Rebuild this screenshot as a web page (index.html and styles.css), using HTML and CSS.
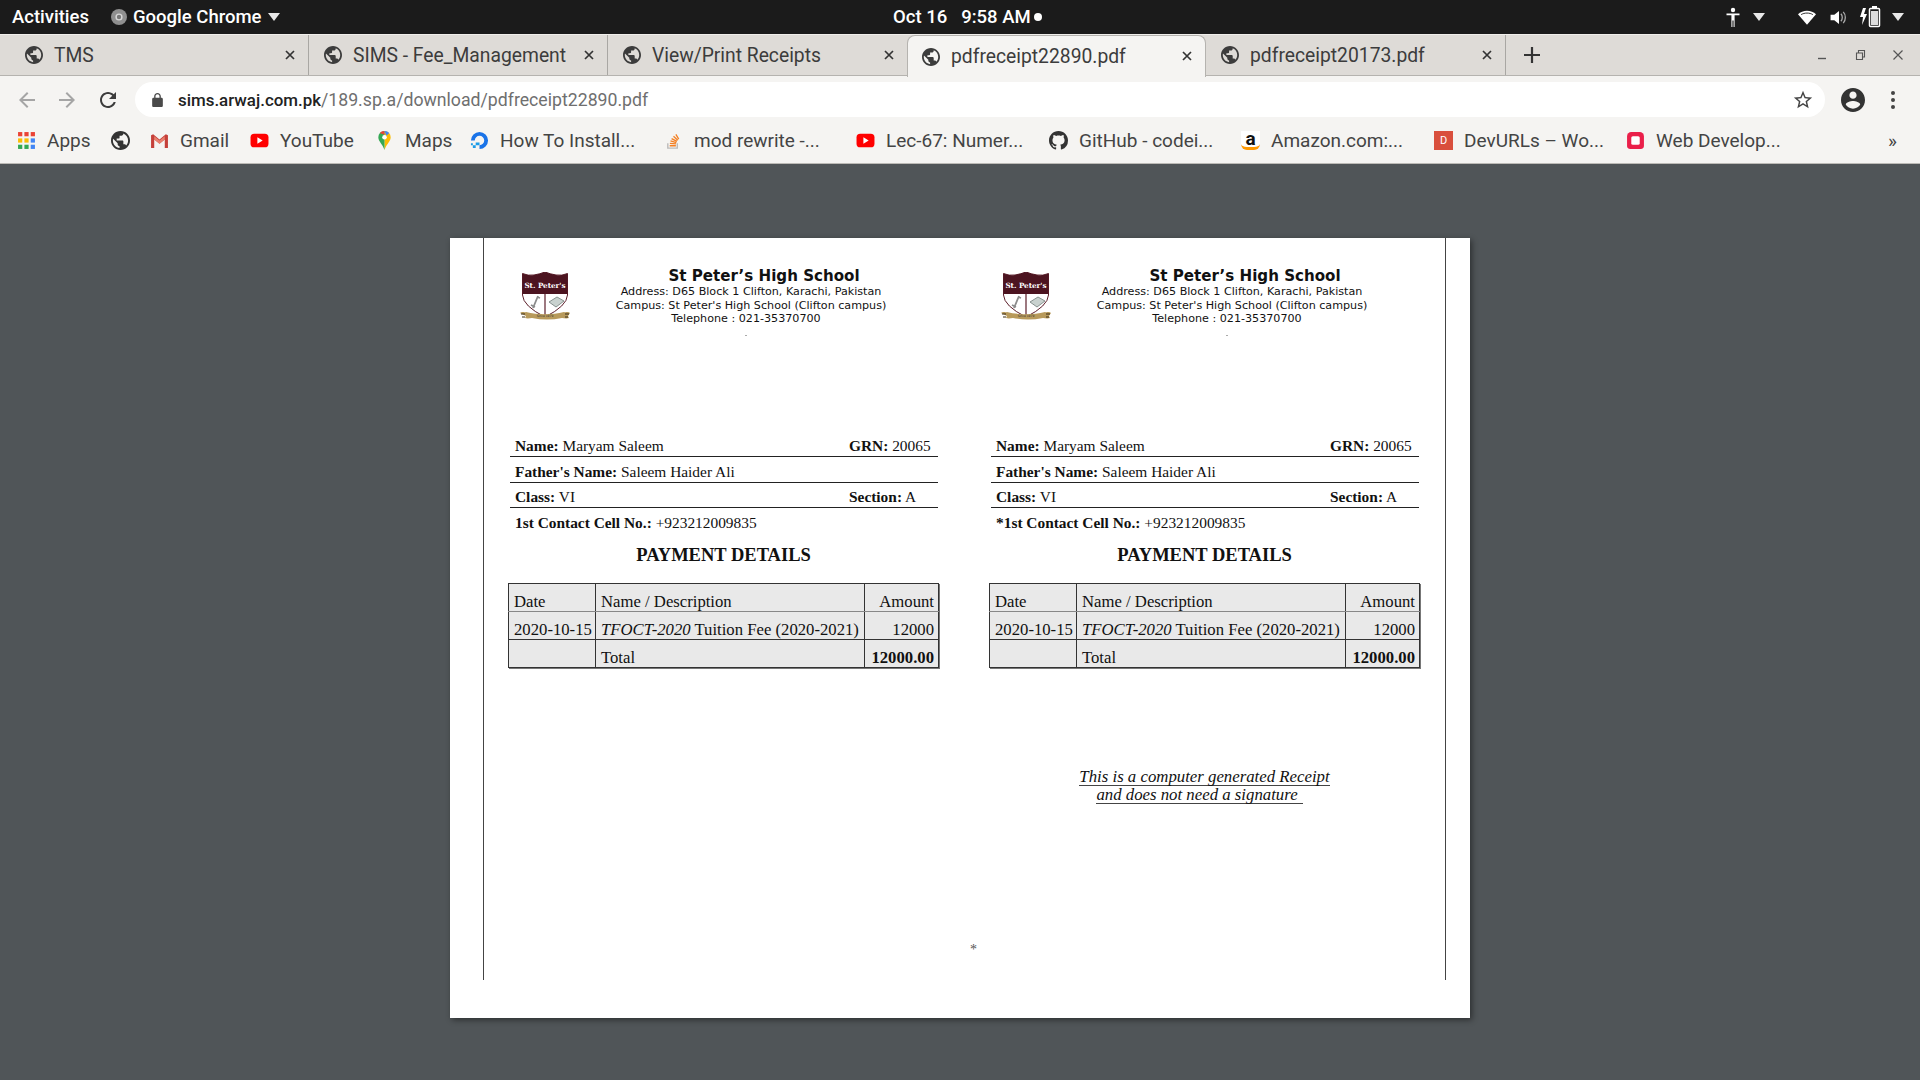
FILE: index.html
```html
<!DOCTYPE html>
<html>
<head>
    <title>pdfreceipt22890.pdf</title>
    <link rel="stylesheet" href="styles.css">
</head>
<body>
    <svg class="icon-defs" width="0" height="0">
        <symbol id="globe" viewBox="2 2 20 20"><path d="M12 2C6.48 2 2 6.48 2 12s4.48 10 10 10 10-4.48 10-10S17.52 2 12 2zm-1 17.93c-3.95-.49-7-3.85-7-7.93 0-.62.08-1.21.21-1.79L9 15v1c0 1.1.9 2 2 2v1.93zm6.9-2.54c-.26-.81-1-1.39-1.9-1.39h-1v-3c0-.55-.45-1-1-1H8v-2h2c.55 0 1-.45 1-1V7h2c1.1 0 2-.9 2-2v-.41c2.93 1.19 5 4.06 5 7.41 0 2.08-.8 3.97-2.1 5.39z"/></symbol>
        <symbol id="close" viewBox="0 0 12 12"><path d="M2 2l8 8M10 2l-8 8" fill="none" stroke="currentColor" stroke-width="1.7"/></symbol>
        <symbol id="youtube" viewBox="0 0 18 18"><rect x="0.5" y="2.5" width="17" height="13" rx="3.5" fill="#f00"/><path d="M7 6l5 3-5 3z" fill="#fff"/></symbol>
        <symbol id="caret" viewBox="0 0 12 8"><path d="M0 0h12L6 8z" fill="currentColor"/></symbol>
    </svg>

    <div class="system-bar">
        <div class="system-left">
            <span>Activities</span>
            <span class="app-name">
                <svg class="app-icon" viewBox="0 0 16 16"><circle cx="8" cy="8" r="8" fill="#8f8f8f"/><circle cx="8" cy="8" r="3.6" fill="#d8d8d8"/><circle cx="8" cy="8" r="2.2" fill="#777"/></svg>
                Google Chrome
                <svg class="caret" width="12" height="8"><use href="#caret"/></svg>
            </span>
        </div>
        <div class="system-clock"><span>Oct 16</span><span>9:58 AM</span><i class="clock-dot"></i></div>
        <div class="system-right">
            <svg class="tray-a11y" viewBox="0 0 16 20"><circle cx="8" cy="3" r="2.2" fill="#fff"/><path d="M1.5 6.5h13v1.8H9.6V20H8.6v-6.5H7.4V20H6.4V8.3H1.5z" fill="#fff"/></svg>
            <svg class="caret caret-a11y" width="12" height="8"><use href="#caret"/></svg>
            <svg class="tray-wifi" viewBox="0 0 20 16"><path d="M0 4.500C5-.8 15-.8 20 4.500L10 16z" fill="#fff"/><path d="M3.500 4.800C7 2.500 13 2.500 16.500 4.800" fill="none" stroke="#1b1b1b" stroke-width="1"/></svg>
            <svg class="tray-volume" viewBox="0 0 18 16"><path d="M0 5h4l5-4v14l-5-4H0z" fill="#fff"/><path d="M11 4c2 2 2 6 0 8M13.5 2c3 3 3 9 0 12" fill="none" stroke="#aaa" stroke-width="1.4"/></svg>
            <svg class="tray-battery" viewBox="0 0 22 22"><path d="M3 2L0 11h3l-1 8 5-11H4l2-6z" fill="#fff"/><rect x="9.5" y="2.5" width="10" height="18" rx="1" fill="#1b1b1b" stroke="#fff" stroke-width="1.5"/><rect x="12" y="0" width="5" height="2.5" fill="#fff"/><rect x="11" y="5" width="7" height="14" fill="#ddd"/></svg>
            <svg class="caret" width="12" height="8"><use href="#caret"/></svg>
        </div>
    </div>

    <div class="tab-strip">
        <div class="tab">
            <svg class="favicon"><use href="#globe"/></svg><span class="tab-title">TMS</span>
            <svg class="tab-close"><use href="#close"/></svg>
        </div>
        <div class="tab">
            <svg class="favicon"><use href="#globe"/></svg><span class="tab-title">SIMS - Fee_Management</span>
            <svg class="tab-close"><use href="#close"/></svg>
        </div>
        <div class="tab tab-plain">
            <svg class="favicon"><use href="#globe"/></svg><span class="tab-title">View/Print Receipts</span>
            <svg class="tab-close"><use href="#close"/></svg>
        </div>
        <div class="tab tab-active">
            <svg class="favicon"><use href="#globe"/></svg><span class="tab-title">pdfreceipt22890.pdf</span>
            <svg class="tab-close"><use href="#close"/></svg>
        </div>
        <div class="tab tab-last">
            <svg class="favicon"><use href="#globe"/></svg><span class="tab-title">pdfreceipt20173.pdf</span>
            <svg class="tab-close"><use href="#close"/></svg>
        </div>
        <svg class="new-tab" viewBox="0 0 16 16"><path d="M8 0v16M0 8h16" stroke="#333" stroke-width="2.2"/></svg>
        <div class="window-controls">
            <svg viewBox="0 0 12 12"><path d="M2 9.5h8" stroke="#555" stroke-width="1.4"/></svg>
            <svg viewBox="0 0 12 12"><path d="M2.500 4h6v6.500h-6zM4.500 4V1.500h6V8H8.500" fill="none" stroke="#555" stroke-width="1.1"/></svg>
            <svg viewBox="0 0 12 12"><path d="M1.500 1.500l9 9M10.500 1.500l-9 9" stroke="#555" stroke-width="1.2"/></svg>
        </div>
    </div>

    <div class="toolbar">
        <svg class="nav-icon nav-disabled" viewBox="0 0 24 24"><path d="M20 11H7.830l5.590-5.590L12 4l-8 8 8 8 1.410-1.410L7.830 13H20v-2z"/></svg>
        <svg class="nav-icon nav-disabled nav-forward" viewBox="0 0 24 24"><path d="M12 4l-1.410 1.410L16.170 11H4v2h12.170l-5.580 5.590L12 20l8-8z"/></svg>
        <svg class="nav-icon nav-reload" viewBox="0 0 24 24"><path d="M17.650 6.350C16.200 4.900 14.210 4 12 4c-4.420 0-7.990 3.580-7.990 8s3.570 8 7.990 8c3.730 0 6.840-2.550 7.730-6h-2.080c-.82 2.330-3.040 4-5.650 4-3.310 0-6-2.690-6-6s2.690-6 6-6c1.660 0 3.140.69 4.220 1.780L13 11h7V4l-2.350 2.350z"/></svg>
        <div class="omnibox">
            <svg class="lock" viewBox="4 1 16 21"><path d="M18 8h-1V6c0-2.760-2.240-5-5-5S7 3.240 7 6v2H6c-1.100 0-2 .9-2 2v10c0 1.100.9 2 2 2h12c1.100 0 2-.9 2-2V10c0-1.100-.9-2-2-2zM9 6c0-1.660 1.340-3 3-3s3 1.340 3 3v2H9V6z"/></svg>
            <span class="url"><b>sims.arwaj.com.pk</b>/189.sp.a/download/pdfreceipt22890.pdf</span>
            <svg class="star" viewBox="0 0 24 24"><path d="M22 9.240l-7.190-.62L12 2 9.190 8.630 2 9.240l5.460 4.730L5.820 21 12 17.270 18.180 21l-1.630-7.030L22 9.240zM12 15.400l-3.760 2.270 1-4.280-3.320-2.880 4.380-.38L12 6.100l1.710 4.040 4.380.38-3.320 2.880 1 4.280L12 15.400z"/></svg>
        </div>
        <svg class="profile" viewBox="2 2 20 20"><path d="M12 2C6.480 2 2 6.480 2 12s4.480 10 10 10 10-4.480 10-10S17.520 2 12 2zm0 3c1.660 0 3 1.340 3 3s-1.340 3-3 3-3-1.340-3-3 1.340-3 3-3zm0 14.200c-2.500 0-4.710-1.280-6-3.220.03-1.990 4-3.080 6-3.080 1.990 0 5.970 1.090 6 3.080-1.290 1.940-3.500 3.220-6 3.220z"/></svg>
        <div class="menu-dots"><i></i><i></i><i></i></div>
    </div>

    <div class="bookmarks">
        <div class="bookmark">
            <svg class="mark" viewBox="0 0 18 18">
                <g fill="#ea4335"><rect x="1" y="1" width="4" height="4"/><rect x="7" y="1" width="4" height="4"/><rect x="13" y="1" width="4" height="4"/></g>
                <g fill="#fbbc04"><rect x="1" y="7" width="4" height="4"/><rect x="7" y="7" width="4" height="4"/></g>
                <rect x="13" y="7" width="4" height="4" fill="#4285f4"/>
                <g fill="#34a853"><rect x="1" y="13" width="4" height="4"/><rect x="7" y="13" width="4" height="4"/></g>
                <rect x="13" y="13" width="4" height="4" fill="#4285f4"/>
            </svg>
            <span>Apps</span>
        </div>
        <div class="bookmark"><svg class="mark mark-globe"><use href="#globe"/></svg></div>
        <div class="bookmark">
            <svg class="mark" viewBox="0 0 18 18"><path d="M1 4v12h3V8l5 4 5-4v8h3V4l-2-1-6 5-6-5z" fill="#c5403a"/><path d="M4 8l5 4 5-4V5L9 9 4 5z" fill="#e9806f"/></svg>
            <span>Gmail</span>
        </div>
        <div class="bookmark"><svg class="mark"><use href="#youtube"/></svg><span>YouTube</span></div>
        <div class="bookmark">
            <svg class="mark" viewBox="0 0 18 20"><path d="M9 0a6.500 6.500 0 0 1 6.500 6.500c0 4.500-4.500 7-6.500 13.500z" fill="#fbbc04"/><path d="M9 0a6.500 6.500 0 0 0-6.500 6.500c0 4.500 4.500 7 6.500 13.500z" fill="#34a853"/><path d="M4 2.200A6.500 6.500 0 0 1 9 0v4z" fill="#ea4335"/><path d="M9 0a6.500 6.500 0 0 1 5 2.200L11 5z" fill="#4285f4"/><circle cx="9" cy="6.500" r="2.400" fill="#fff"/></svg>
            <span>Maps</span>
        </div>
        <div class="bookmark">
            <svg class="mark" viewBox="0 0 20 20"><path d="M10 19v-4a5 5 0 1 0-5-5H1a9 9 0 1 1 9 9z" fill="#1a73e8"/><path d="M6 15h4v-3H6zM3 18h3v-3H3zM1 15h2v-2H1z" fill="#1a9be8"/></svg>
            <span>How To Install...</span>
        </div>
        <div class="bookmark">
            <svg class="mark" viewBox="0 0 18 20"><path d="M3 13v5h10v-5" fill="none" stroke="#bcbbbb" stroke-width="1.500"/><path d="M5 15.500h6.500M5.200 13l6.400.6M5.800 10.500l6.200 1.700M7 8l5.600 3M9 5.500l4.500 4.200M11.500 3.500l3 5" stroke="#f48024" stroke-width="1.400" fill="none"/></svg>
            <span>mod rewrite -...</span>
        </div>
        <div class="bookmark"><svg class="mark"><use href="#youtube"/></svg><span>Lec-67: Numer...</span></div>
        <div class="bookmark">
            <svg class="mark mark-github" viewBox="0 0 16 16"><path d="M8 0C3.580 0 0 3.580 0 8c0 3.540 2.290 6.530 5.470 7.590.4.070.55-.17.55-.38 0-.19-.01-.82-.01-1.490-2.010.37-2.530-.49-2.690-.94-.09-.23-.48-.94-.82-1.130-.28-.15-.68-.52-.01-.53.63-.01 1.080.58 1.230.82.72 1.210 1.870.87 2.330.66.07-.52.28-.87.51-1.070-1.780-.2-3.640-.89-3.640-3.950 0-.87.31-1.590.82-2.150-.08-.2-.36-1.020.08-2.120 0 0 .67-.21 2.200.82.64-.18 1.320-.27 2-.27.68 0 1.360.09 2 .27 1.530-1.040 2.200-.82 2.200-.82.44 1.100.16 1.920.08 2.120.51.56.82 1.270.82 2.150 0 3.070-1.870 3.750-3.650 3.950.29.25.54.73.54 1.480 0 1.070-.01 1.930-.01 2.200 0 .21.15.46.55.38A8.013 8.013 0 0016 8c0-4.420-3.580-8-8-8z"/></svg>
            <span>GitHub - codei...</span>
        </div>
        <div class="bookmark">
            <span class="mark mark-amazon">a</span>
            <span>Amazon.com:...</span>
        </div>
        <div class="bookmark"><span class="mark mark-dev">D</span><span>DevURLs – Wo...</span></div>
        <div class="bookmark">
            <svg class="mark" viewBox="0 0 18 18"><path d="M1 5a4 4 0 0 1 4-4h8a4 4 0 0 1 4 4v9a3 3 0 0 1-3 3H4a3 3 0 0 1-3-3z" fill="#ea1f4a"/><rect x="5" y="5" width="8" height="8" rx="1.500" fill="#fff"/></svg>
            <span>Web Develop...</span>
        </div>
        <span class="more-bookmarks">»</span>
    </div>

    <div class="viewer">
        <div class="pdf-page">
            <div class="pdf-frame">
                <div class="receipts">
                    <div class="receipt">
                        <div class="school-head">
                            <svg class="crest" viewBox="0 0 50 50">
                                <path d="M2.500 1.500Q8 4 14 3Q20 2 25 0Q30 2 36 3Q42 4 47.500 1.500V23Q47 34 25 45Q3 34 2.500 23z" fill="#fff" stroke="#5c1f2a" stroke-width="1"/>
                                <path d="M2.500 1.500Q8 4 14 3Q20 2 25 0Q30 2 36 3Q42 4 47.500 1.500V22H2.500z" fill="#4c1420"/>
                                <text x="25" y="15.500" class="crest-name">St. Peter's</text>
                                <path d="M25 22v22" stroke="#5c1f2a" stroke-width="1.200"/>
                                <path d="M18 24l-5 12M11 33l4 2M17 25l3 1" stroke="#8c8c8c" stroke-width="1.800" fill="none"/>
                                <path d="M29 30l8-5 7 4-8 6z" fill="#c9d2cf" stroke="#87928f" stroke-width="1"/>
                                <path d="M0 41c2-2 4 0 6-1 12 3 26 3 38 0 2 1 4-1 6 1l-2 3 1 2c-3 1-5 0-7 0-10 2-20 2-30 0-2 0-4 1-7 0l1-2z" fill="#b89a5b"/>
                                <path d="M1 42h4M45 42h4M2 45h3M45 45h3" stroke="#3a2c16" stroke-width="1"/>
                                <text x="25" y="45" class="crest-since">Since 1979</text>
                            </svg>
                            <div class="school-text">
                                <h2>St Peter’s High School</h2>
                                <p>Address: D65 Block 1 Clifton, Karachi, Pakistan</p>
                                <p>Campus: St Peter's High School (Clifton campus)</p>
                                <p class="school-phone">Telephone : 021-35370700</p>
                                <i class="speck"></i>
                            </div>
                        </div>
                        <div class="info-row"><span><b>Name:</b> Maryam Saleem</span><span><b>GRN:</b> 20065</span></div>
                        <div class="info-row"><span><b>Father's Name:</b> Saleem Haider Ali</span></div>
                        <div class="info-row"><span><b>Class:</b> VI</span><span><b>Section:</b> A</span></div>
                        <div class="info-row info-plain"><span><b>1st Contact Cell No.:</b> +923212009835</span></div>
                        <h3 class="pay-title">PAYMENT DETAILS</h3>
                        <table class="pay-table">
                            <tr class="row-head"><td class="col-date">Date</td><td class="col-name">Name / Description</td><td class="col-amount">Amount</td></tr>
                            <tr><td>2020-10-15</td><td><em>TFOCT-2020</em> Tuition Fee (2020-2021)</td><td class="col-amount">12000</td></tr>
                            <tr><td></td><td>Total</td><td class="col-amount"><b>12000.00</b></td></tr>
                        </table>
                    </div>
                    <div class="receipt">
                        <div class="school-head">
                            <svg class="crest" viewBox="0 0 50 50">
                                <path d="M2.500 1.500Q8 4 14 3Q20 2 25 0Q30 2 36 3Q42 4 47.500 1.500V23Q47 34 25 45Q3 34 2.500 23z" fill="#fff" stroke="#5c1f2a" stroke-width="1"/>
                                <path d="M2.500 1.500Q8 4 14 3Q20 2 25 0Q30 2 36 3Q42 4 47.500 1.500V22H2.500z" fill="#4c1420"/>
                                <text x="25" y="15.500" class="crest-name">St. Peter's</text>
                                <path d="M25 22v22" stroke="#5c1f2a" stroke-width="1.200"/>
                                <path d="M18 24l-5 12M11 33l4 2M17 25l3 1" stroke="#8c8c8c" stroke-width="1.800" fill="none"/>
                                <path d="M29 30l8-5 7 4-8 6z" fill="#c9d2cf" stroke="#87928f" stroke-width="1"/>
                                <path d="M0 41c2-2 4 0 6-1 12 3 26 3 38 0 2 1 4-1 6 1l-2 3 1 2c-3 1-5 0-7 0-10 2-20 2-30 0-2 0-4 1-7 0l1-2z" fill="#b89a5b"/>
                                <path d="M1 42h4M45 42h4M2 45h3M45 45h3" stroke="#3a2c16" stroke-width="1"/>
                                <text x="25" y="45" class="crest-since">Since 1979</text>
                            </svg>
                            <div class="school-text">
                                <h2>St Peter’s High School</h2>
                                <p>Address: D65 Block 1 Clifton, Karachi, Pakistan</p>
                                <p>Campus: St Peter's High School (Clifton campus)</p>
                                <p class="school-phone">Telephone : 021-35370700</p>
                                <i class="speck"></i>
                            </div>
                        </div>
                        <div class="info-row"><span><b>Name:</b> Maryam Saleem</span><span><b>GRN:</b> 20065</span></div>
                        <div class="info-row"><span><b>Father's Name:</b> Saleem Haider Ali</span></div>
                        <div class="info-row"><span><b>Class:</b> VI</span><span><b>Section:</b> A</span></div>
                        <div class="info-row info-plain"><span><b>*1st Contact Cell No.:</b> +923212009835</span></div>
                        <h3 class="pay-title">PAYMENT DETAILS</h3>
                        <table class="pay-table">
                            <tr class="row-head"><td class="col-date">Date</td><td class="col-name">Name / Description</td><td class="col-amount">Amount</td></tr>
                            <tr><td>2020-10-15</td><td><em>TFOCT-2020</em> Tuition Fee (2020-2021)</td><td class="col-amount">12000</td></tr>
                            <tr><td></td><td>Total</td><td class="col-amount"><b>12000.00</b></td></tr>
                        </table>
                        <div class="signature">
                            <span class="sig-line">This is a computer generated Receipt</span>
                            <span class="sig-line sig-second">and does not need a signature</span>
                        </div>
                    </div>
                </div>
                <div class="page-mark">*</div>
            </div>
        </div>
    </div>
</body>
</html>
```

FILE: styles.css
```css
* {
    box-sizing: border-box;
}

html,
body {
    margin: 0;
    padding: 0;
}

body {
    width: 1920px;
    height: 1080px;
    overflow: hidden;
    display: flex;
    flex-direction: column;
    background-color: #505558;
    font-family: Roboto, "Noto Sans", sans-serif;
    color: #333;
}

.icon-defs {
    position: absolute;
}

/* top system bar */
.system-bar {
    height: 34px;
    flex: none;
    position: relative;
    display: flex;
    align-items: center;
    background-color: #1b1b1b;
    color: #fff;
    font-size: 18.5px;
    font-weight: 500;
}

.system-left {
    display: flex;
    align-items: center;
    padding-left: 12px;
    gap: 22px;
}

.app-name {
    display: flex;
    align-items: center;
    gap: 6px;
}

.app-icon {
    width: 16px;
    height: 16px;
}

.caret {
    color: #e8e8e8;
    width: 12px;
    height: 8px;
}

.system-clock {
    position: absolute;
    left: 893px;
    top: 0;
    height: 34px;
    display: flex;
    align-items: center;
    gap: 14px;
}

.clock-dot {
    width: 8px;
    height: 8px;
    border-radius: 50%;
    background-color: #fff;
    margin-left: -11px;
}

.system-right {
    margin-left: auto;
    display: flex;
    align-items: center;
    padding-right: 16px;
}

.tray-a11y {
    width: 16px;
    height: 20px;
}

.caret-a11y {
    margin-left: 12px;
    margin-right: 33px;
}

.tray-wifi {
    width: 18px;
    height: 15px;
}

.tray-volume {
    width: 18px;
    height: 15px;
    margin-left: 14px;
}

.tray-battery {
    width: 22px;
    height: 22px;
    margin-left: 12px;
    margin-right: 10px;
}

/* tabs */
.tab-strip {
    height: 42px;
    flex: none;
    display: flex;
    align-items: stretch;
    background-color: #dedbd7;
    border-top: 1px solid #f0eeeb;
    border-bottom: 1px solid #b5b3af;
    padding-left: 10px;
    font-size: 19.3px;
    color: #3c3c3c;
}

.tab {
    width: 299px;
    display: flex;
    align-items: center;
    padding-left: 15px;
    position: relative;
    border-right: 1px solid #a9a7a3;
}

.tab-plain {
    border-right: none;
}

.tab-active {
    background-color: #f5f4f2;
    border: 1px solid #b5b3af;
    border-bottom: none;
    border-radius: 8px 8px 0 0;
    height: 42px;
    padding-left: 14px;
    z-index: 1;
}

.tab-last {
    width: 300px;
}

.favicon {
    width: 18px;
    height: 18px;
    flex: none;
    fill: #3c3c3c;
}

.tab-title {
    margin-left: 11px;
    white-space: nowrap;
}

.tab-close {
    position: absolute;
    right: 12px;
    top: 13px;
    width: 12px;
    height: 14px;
    color: #333;
}

.new-tab {
    width: 16px;
    height: 16px;
    margin: 12px 0 0 18px;
}

.window-controls {
    margin-left: auto;
    display: flex;
    gap: 26px;
    align-items: center;
    padding-right: 16px;
}

.window-controls svg {
    width: 12px;
    height: 12px;
}

/* address bar */
.toolbar {
    height: 47px;
    flex: none;
    display: flex;
    align-items: center;
    background-color: #f5f4f2;
    padding-left: 15px;
}

.nav-icon {
    width: 24px;
    height: 24px;
    flex: none;
    fill: #3c3c3c;
}

.nav-disabled {
    fill: #a5a5a5;
}

.nav-forward {
    margin-left: 16px;
}

.nav-reload {
    margin-left: 17px;
}

.omnibox {
    width: 1690px;
    height: 35px;
    margin: 0 0 0 15px;
    background-color: #fff;
    border-radius: 18px;
    display: flex;
    align-items: center;
    padding-left: 17px;
    flex: none;
}

.lock {
    width: 11px;
    height: 14px;
    fill: #4a4a4a;
}

.url {
    margin-left: 15px;
    font-size: 17.7px;
    color: #6f6f6f;
    white-space: nowrap;
}

.url b {
    font-size: 16.9px;
    font-weight: 500;
    color: #222;
}

.star {
    width: 22px;
    height: 22px;
    fill: #444;
    margin-left: auto;
    margin-right: 11px;
}

.profile {
    width: 24px;
    height: 24px;
    margin-left: 16px;
    fill: #333;
    flex: none;
}

.menu-dots {
    display: flex;
    flex-direction: column;
    gap: 3px;
    margin-left: 26px;
}

.menu-dots i {
    width: 4px;
    height: 4px;
    border-radius: 50%;
    background-color: #444;
}

/* bookmarks */
.bookmarks {
    height: 41px;
    flex: none;
    display: grid;
    grid-template-columns: 94px 39px 100px 125px 95px 194px 192px 193px 192px 193px 192px 192px 1fr;
    align-items: center;
    padding: 0 0 6px 17px;
    background-color: #f5f4f2;
    border-bottom: 1px solid #bcbab6;
    font-size: 19px;
    color: #444;
}

.bookmark {
    display: flex;
    align-items: center;
    gap: 11px;
    white-space: nowrap;
}

.mark {
    width: 19px;
    height: 19px;
    flex: none;
}

.mark-globe {
    fill: #333;
}

.mark-github {
    fill: #333;
}

.mark-amazon {
    background-color: #fff;
    color: #111;
    font-size: 19px;
    font-weight: 700;
    line-height: 15px;
    text-align: center;
    border-bottom: 3px solid #f90;
    border-radius: 0 0 6px 6px;
}

.mark-dev {
    background-color: #d94f3d;
    color: #fff;
    font-size: 11px;
    line-height: 19px;
    text-align: center;
}

.more-bookmarks {
    text-align: right;
    padding-right: 23px;
    color: #444;
}

/* pdf viewer */
.viewer {
    flex: 1;
    padding: 74px 0 0 450px;
}

.pdf-page {
    width: 1020px;
    height: 780px;
    padding: 0 24px 0 33px;
    background-color: #fff;
    box-shadow: 2px 2px 6px rgba(0, 0, 0, 0.45);
}

.pdf-frame {
    height: 742px;
    border-left: 1px solid #444;
    border-right: 1px solid #444;
    padding-left: 24px;
    position: relative;
}

.receipts {
    display: grid;
    grid-template-columns: 431px 431px;
    column-gap: 50px;
}

.school-head {
    display: flex;
    align-items: flex-start;
    padding: 29px 0 0 12px;
    height: 193px;
    font-family: "DejaVu Sans", sans-serif;
    color: #111;
}

.crest {
    width: 50px;
    height: 50px;
    flex: none;
    margin-top: 5px;
}

.crest-name {
    font-family: "DejaVu Serif", serif;
    font-size: 7.2px;
    font-weight: 700;
    fill: #fff;
    text-anchor: middle;
}

.crest-since {
    font-family: "DejaVu Sans", sans-serif;
    font-size: 3px;
    fill: #333;
    text-anchor: middle;
}

.school-text {
    width: 388px;
    flex: none;
    text-align: center;
    position: relative;
}

.school-text h2 {
    margin: 0;
    font-size: 15.1px;
    line-height: 18px;
    font-weight: 700;
}

.school-text p {
    margin: 0;
    padding-right: 26px;
    font-size: 11.15px;
    line-height: 13.7px;
}

.school-text .school-phone {
    padding-right: 36px;
}

.speck {
    display: block;
    width: 2px;
    height: 1px;
    margin: 9px 0 0 175px;
    background-color: #aaa;
}

.info-row {
    display: grid;
    grid-template-columns: 334px 1fr;
    height: 26px;
    margin: 0 1px 0 2px;
    padding: 6px 0 0 5px;
    border-bottom: 1px solid #222;
    font-family: "Liberation Serif", serif;
    font-size: 15.4px;
    line-height: 18px;
    color: #111;
    white-space: nowrap;
}

.info-row:nth-child(4) {
    height: 25px;
    padding-top: 5px;
}

.info-plain {
    border-bottom: none;
}

.pay-title {
    margin: 10px 0 0;
    font-family: "Liberation Serif", serif;
    font-size: 18.5px;
    line-height: 22px;
    font-weight: 700;
    text-align: center;
    color: #111;
}

.pay-table {
    width: 431px;
    margin-top: 17px;
    border-collapse: collapse;
    background-color: #e9e9e9;
    font-family: "Liberation Serif", serif;
    font-size: 16.7px;
    color: #111;
    table-layout: fixed;
    box-shadow: 1px 1px 0 #777;
}

.pay-table td {
    border: 1px solid #333;
    height: 28px;
    padding: 7px 4px 0 5px;
    line-height: 19px;
    white-space: nowrap;
}

.pay-table .row-head td {
    border-bottom-color: #888;
}

.col-date {
    width: 87px;
}

.col-name {
    width: 269px;
}

.col-amount {
    text-align: right;
}

.signature {
    display: flex;
    flex-direction: column;
    align-items: center;
    margin-top: 100px;
    font-family: "Liberation Serif", serif;
    font-style: italic;
    font-size: 16.8px;
    line-height: 18px;
    color: #111;
}

.sig-line {
    display: block;
    border-bottom: 1px solid #444;
    white-space: pre;
    height: 18px;
}

.sig-second {
    padding-right: 5px;
    margin-right: 10px;
}

.page-mark {
    position: absolute;
    left: 486px;
    top: 704px;
    font-family: "Liberation Serif", serif;
    font-size: 14px;
    color: #555;
}
```
